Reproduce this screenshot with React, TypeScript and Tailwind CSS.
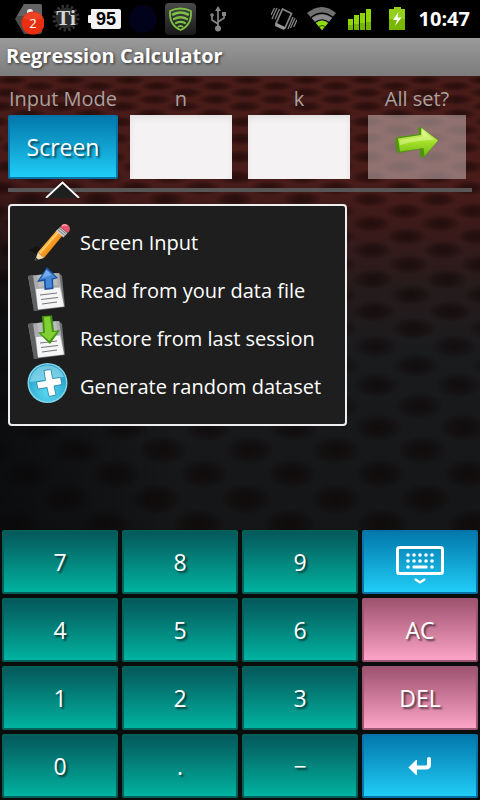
import { clsx } from "clsx";
import { useState, type ReactNode } from "react";

type Tone = "teal" | "blue" | "pink";

const TONES: Record<Tone, string> = {
  teal: "border-[#04605a] bg-linear-to-b from-[#04595b] to-[#00b3a0]",
  blue: "border-[#0873a6] bg-linear-to-b from-[#0479ad] to-[#20cdf6]",
  pink: "border-[#9c5573] bg-linear-to-b from-[#9f5470] to-[#fda4c6]",
};

// Rows of dimples get taller and wider apart towards the bottom of the screen.
const DIMPLES = (() => {
  const out: { x: number; y: number; s: number }[] = [];
  const centre = 336;
  let y = 4;
  let row = 1;
  while (y < 560) {
    const step = 34.5 + (y - 139) * 0.037;
    for (let k = -14; k < 10; k++) {
      if (Math.abs(k + row) % 2 === 0) out.push({ x: centre + k * step, y, s: step / 34.5 });
    }
    y += 6 + y * 0.0475;
    row += 1;
  }
  return out;
})();

function Backdrop() {
  return (
    <svg
      className="absolute inset-0 h-full w-full"
      viewBox="0 0 480 724"
      preserveAspectRatio="xMidYMin slice"
      aria-hidden="true"
    >
      <defs>
        <linearGradient id="wall" x1="0" y1="0" x2="0" y2="1">
          <stop offset="0" stopColor="#471b18" />
          <stop offset="0.15" stopColor="#491c1a" />
          <stop offset="0.21" stopColor="#3a1a19" />
          <stop offset="0.29" stopColor="#261b1c" />
          <stop offset="0.38" stopColor="#1a1b1d" />
          <stop offset="0.6" stopColor="#151617" />
          <stop offset="1" stopColor="#0d0d0d" />
        </linearGradient>
        <linearGradient id="edge" x1="0" y1="0" x2="1" y2="0">
          <stop offset="0" stopColor="#08090b" stopOpacity="0.7" />
          <stop offset="0.35" stopColor="#08090b" stopOpacity="0" />
        </linearGradient>
        <linearGradient id="reach" x1="0" y1="0" x2="0" y2="1">
          <stop offset="0" stopColor="#000" />
          <stop offset="0.25" stopColor="#fff" />
        </linearGradient>
        <mask id="lower">
          <rect y="80" width="480" height="644" fill="url(#reach)" />
        </mask>
        <radialGradient id="dimple">
          <stop offset="0" stopColor="#0a0100" stopOpacity="0.5" />
          <stop offset="0.5" stopColor="#0a0100" stopOpacity="0.36" />
          <stop offset="1" stopColor="#0a0100" stopOpacity="0" />
        </radialGradient>
      </defs>
      <rect width="480" height="724" fill="url(#wall)" />
      {DIMPLES.map((d, i) => (
        <ellipse key={i} cx={d.x} cy={d.y} rx={20 * d.s} ry={5 + d.y * 0.026} fill="url(#dimple)" />
      ))}
      <rect y="80" width="480" height="644" fill="url(#edge)" mask="url(#lower)" />
    </svg>
  );
}

function StatusBar() {
  return (
    <header className="flex h-[38px] items-center justify-between bg-black pr-[10px] pl-[15px]">
      <div className="flex items-center gap-2">
        <svg width="29" height="32" viewBox="0 0 29 32">
          <path d="M9 1h16q2 0 2 2v26q0 2-2 2H9L0 16z" fill="#4b4b4b" />
          <path d="M9 1h16q2 0 2 2v10H2z" fill="#636363" />
          <circle cx="15" cy="9" r="3" fill="#eee" />
          <circle cx="18" cy="20" r="11.500" fill="#e92f10" />
          <path d="M8 15a11.500 11.500 0 0 1 20 0q-10 4-20 0z" fill="#f4553a" opacity="0.5" />
          <text x="18" y="25" textAnchor="middle" fontSize="13" fill="#fff" fontFamily="Open Sans, sans-serif">
            2
          </text>
        </svg>
        <svg width="28" height="30" viewBox="0 0 28 30">
          <circle cx="14" cy="14" r="10.500" fill="#2b2b2b" />
          <circle cx="14" cy="14" r="12" fill="none" stroke="#333" strokeWidth="3" strokeDasharray="2.400 2.300" />
          <text
            x="14"
            y="21"
            textAnchor="middle"
            fontSize="21"
            fontWeight="700"
            fill="#d4d4d4"
            fontFamily="Liberation Serif, serif"
          >
            Ti
          </text>
        </svg>
        <svg width="33" height="22" viewBox="0 0 33 22">
          <path d="M4 1h27q2 0 2 2v16q0 2-2 2H5q-2 0-2-2v-4H1q-1 0-1-1V8q0-1 1-1h2V2q0-1 1-1z" fill="#f2f2f2" />
          <text
            x="18"
            y="17"
            textAnchor="middle"
            fontSize="18"
            fontWeight="700"
            fill="#000"
            fontFamily="Liberation Sans, sans-serif"
          >
            95
          </text>
        </svg>
        <div className="size-7 rounded-full bg-[#02021a]" />
        <svg width="31" height="32" viewBox="0 0 31 32">
          <defs>
            <linearGradient id="tile" x1="0" y1="0" x2="0" y2="1">
              <stop offset="0" stopColor="#4a4a4a" />
              <stop offset="1" stopColor="#181818" />
            </linearGradient>
          </defs>
          <rect width="31" height="32" rx="4" fill="url(#tile)" />
          <g fill="none" stroke="#7cc142" strokeLinecap="round">
            <path d="M5 8q10.500-5 21 0q1 14-10.500 19Q4 22 5 8z" strokeWidth="1.800" strokeLinejoin="round" />
            <path d="M8 11.500q7.500-4 15 0" strokeWidth="2.600" />
            <path d="M9 16q6.500-3.500 13 0" strokeWidth="2.400" />
            <path d="M11 20q4.500-2.400 9 0" strokeWidth="2.200" />
            <path d="M13.500 23.500q2-1 4 0" strokeWidth="1.800" />
          </g>
        </svg>
        <svg width="28" height="28" viewBox="0 0 28 28" fill="none" stroke="#858585" strokeWidth="1.700">
          <path d="M14 5v17M14 19l-6-4v-4M14 17l6-4v-3" />
          <path d="M14 1l3 5h-6z" fill="#858585" stroke="none" />
          <circle cx="14" cy="23.500" r="3" fill="#858585" stroke="none" />
          <circle cx="8" cy="10" r="1.800" fill="#858585" stroke="none" />
          <path d="M18 7h4v4h-4z" fill="#858585" stroke="none" />
        </svg>
      </div>
      <div className="flex items-center gap-2.5">
        <svg width="26" height="26" viewBox="0 0 26 26" fill="none" stroke="#858585">
          <path d="M11.500 3L20.500 7.500L14 22L5 17.500z" strokeWidth="1.800" strokeLinejoin="round" />
          <path d="M4.500 17L14.500 21.500L13 24L4 20z" fill="#9a9a9a" stroke="none" />
          <path d="M6 2L1 13M8.500 3L4 13M3.500 2L0 9" strokeWidth="1.300" />
          <path d="M22 11l-5 12M24 12l-4.500 10M25.800 14l-3 7" strokeWidth="1.300" />
        </svg>
        <svg width="30" height="26" viewBox="0 0 30 26">
          <path d="M15 24L0 7q15-12 29 0z" fill="#707070" />
          <path d="M15 24L5 12q10-7 20 0z" fill="#8a8a8a" />
          <path d="M4 11.500q11-8.500 22 0" fill="none" stroke="#000" strokeWidth="1.500" />
          <path d="M9 17q6-4.500 12 0L15 24z" fill="#8fdc08" />
          <path d="M8 16.500q7-5.500 14 0" fill="none" stroke="#000" strokeWidth="1.200" />
          <path d="M12 20.500q3-2 6 0" fill="none" stroke="#2d4d00" strokeWidth="1" />
        </svg>
        <svg width="30" height="26" viewBox="0 0 30 26" fill="#8ed606">
          <path d="M1 13h5v11H1zM7 9h5v15H7zM13 7h5v17h-5zM19 3h5v21h-5z" />
          <path d="M1 19h5v5H1zM7 18h5v6H7zM13 17h5v7h-5zM19 16h5v8h-5z" fill="#71b500" />
        </svg>
        <svg width="22" height="26" viewBox="0 0 22 26">
          <path d="M7 1h7v2h4v21H2V3h5z" fill="#93cf1b" />
          <path d="M2 13h16v11H2z" fill="#78b800" />
          <path d="M11.500 6L6 14h4L8 20L14.500 11.500h-4z" fill="#fff" />
        </svg>
        <time className="text-xl font-bold text-white">10:47</time>
      </div>
    </header>
  );
}

function PencilIcon() {
  return (
    <svg width="44" height="44" viewBox="0 0 44 44">
      <defs>
        <linearGradient id="wood" x1="0" y1="0" x2="1" y2="1">
          <stop offset="0.3" stopColor="#ffc35a" />
          <stop offset="0.5" stopColor="#fb9d20" />
          <stop offset="0.75" stopColor="#d77410" />
        </linearGradient>
      </defs>
      <path d="M12 34L3 29l8-4l6 5z" fill="#0c0c0c" opacity="0.6" />
      <path d="M12 31L31 9l6 5L18 37z" fill="url(#wood)" />
      <path d="M14 32L32.500 11" stroke="#ffd27a" strokeWidth="1.500" />
      <path d="M12 31l6 6L9 39.500z" fill="#f0d9a8" />
      <path d="M10 36.500l2.500 2.200l-3.500 0.800z" fill="#333" />
      <path d="M30 10l4-4l7.500 6l-4 4.500z" fill="#c9c9c9" />
      <path d="M31.500 8.500l7.500 6M33 7l7.500 6" stroke="#777" strokeWidth="1" />
      <path d="M34 6q4-5 8-2t0 8z" fill="#e4576c" />
      <path d="M36 5q3-2.500 5 0" stroke="#ffa1ac" strokeWidth="1.500" fill="none" />
    </svg>
  );
}

function DiskIcon({ direction }: { direction: "up" | "down" }) {
  return (
    <svg width="44" height="44" viewBox="0 2 44 44" className="overflow-visible">
      <path d="M2 9L33 6l3 3l3 31L8 44z" fill="#6c6e70" />
      <path d="M2 9L33 6l5 32L10 41z" fill="#a9abad" />
      <path d="M2 9l5-0.500L12 43l-4 1z" fill="#5f6163" />
      <path d="M11 8L30 6.500L32 18L13 20z" fill="#b9bbbd" />
      <path d="M10 22l24-1.500l4 19L12 42.500z" fill="#f5f5f5" />
      <path d="M14 28l17-2M15 32.500l17-2M16 37l15-2" stroke="#777" strokeWidth="1.200" />
      {direction === "up" ? (
        <>
          <path d="M21 0L32 11l-5 1.500l0.500 9.500l-9 1l-0.500-9l-7 1z" fill="#1b4f9c" />
          <path d="M20.500 2L30 10.500l-4.500 1l0.500 9l-6 0.500l-0.500-9l-6 1z" fill="#4488d8" />
          <path d="M20.500 3L26 8q-5 1-10 3z" fill="#8cbcf2" opacity="0.7" />
        </>
      ) : (
        <>
          <path d="M16 1l10-0.500l2 15.500l6-1L24 29L12 17.500l5-0.500z" fill="#3f9210" />
          <path d="M18 2l6-0.500l2 15.500l5-0.500L23.500 26L14.500 18.500l4.500-0.500z" fill="#82cf31" />
        </>
      )}
    </svg>
  );
}

function PlusIcon() {
  return (
    <svg width="44" height="44" viewBox="0 3 44 44" className="overflow-visible">
      <defs>
        <radialGradient id="orb" cx="0.5" cy="0.75" r="0.7">
          <stop offset="0" stopColor="#5bd9f3" />
          <stop offset="0.7" stopColor="#33afd3" />
          <stop offset="1" stopColor="#2196bd" />
        </radialGradient>
      </defs>
      <circle cx="21.500" cy="21" r="20" fill="#7fd4ea" />
      <circle cx="21.500" cy="21" r="18.500" fill="url(#orb)" />
      <path d="M4 20A17.500 17.500 0 0 1 38 15Q22 17 4 20z" fill="#a5e6f5" opacity="0.6" />
      <path
        d="M18 8.500l7-1l1.500 9l8-1l1.500 7l-8 1.500l2 9l-7 1.500l-2-9l-9 1.500l-1.500-7l9-1.500z"
        fill="#fff"
        stroke="#1c7fa3"
        strokeWidth="0.800"
      />
    </svg>
  );
}

function ArrowIcon() {
  return (
    <svg width="46" height="34" viewBox="0 0 46 34">
      <defs>
        <linearGradient id="leaf" x1="0" y1="0" x2="0" y2="1">
          <stop offset="0" stopColor="#e2f78e" />
          <stop offset="0.5" stopColor="#a5e02a" />
          <stop offset="1" stopColor="#6fbb10" />
        </linearGradient>
      </defs>
      <path d="M1 13l3-2l21-3l-1-6l3-1l17 13L30 32l-4-2l-0.500-7L5 27l-2.500-2z" fill="#4f9410" />
      <path d="M4 12.500L27 9l0.500-7L44 14.500L30.500 30L29.500 22L6 25.500z" fill="url(#leaf)" />
      <path d="M5.500 14L28.500 10.500l0-6L40 14Q24 14 6 19z" fill="#f0ffae" opacity="0.45" />
    </svg>
  );
}

function KeyboardIcon() {
  return (
    <svg width="50" height="44" viewBox="0 0 50 44" fill="#fff">
      <rect x="2.500" y="7.500" width="45" height="26" rx="2" fill="none" stroke="#fff" strokeWidth="3" />
      {[0, 1, 2, 3, 4].map((c) => (
        <g key={c}>
          <circle cx={13 + c * 6} cy="15" r="1.800" />
          <circle cx={13 + c * 6} cy="21" r="1.800" />
        </g>
      ))}
      <circle cx="13" cy="27" r="1.800" />
      <circle cx="37" cy="27" r="1.800" />
      <rect x="17.500" y="25.500" width="15" height="3" rx="1" />
      <path d="M20.500 39.500l4.500 3l4.500-3" fill="none" stroke="#fff" strokeWidth="2.200" strokeLinecap="round" />
    </svg>
  );
}

function EnterIcon() {
  return (
    <svg width="24" height="20" viewBox="0 0 24 20">
      <path d="M21 3v5.500q0 3-3 3H8" fill="none" stroke="#fff" strokeWidth="4" strokeLinecap="round" />
      <path d="M8.500 4v15L1 11.500z" fill="#fff" stroke="#fff" strokeLinejoin="round" />
    </svg>
  );
}

const MENU: { label: string; icon: ReactNode }[] = [
  { label: "Screen Input", icon: <PencilIcon /> },
  { label: "Read from your data file", icon: <DiskIcon direction="up" /> },
  { label: "Restore from last session", icon: <DiskIcon direction="down" /> },
  { label: "Generate random dataset", icon: <PlusIcon /> },
];

const KEYS: { name: string; tone?: Tone; icon?: ReactNode }[] = [
  { name: "7" },
  { name: "8" },
  { name: "9" },
  { name: "Keyboard", tone: "blue", icon: <KeyboardIcon /> },
  { name: "4" },
  { name: "5" },
  { name: "6" },
  { name: "AC", tone: "pink" },
  { name: "1" },
  { name: "2" },
  { name: "3" },
  { name: "DEL", tone: "pink" },
  { name: "0" },
  { name: "." },
  { name: "−" },
  { name: "Enter", tone: "blue", icon: <EnterIcon /> },
];

const shadow = "text-shadow-[2px_2px_2px_rgb(0_0_0_/_0.6)]";
const label = "block text-center text-xl leading-7 whitespace-nowrap text-[#aaa09e]";
const field =
  "block h-16 w-full bg-[#f4f2f2] px-2 text-center text-[23px] text-black shadow-[inset_0_3px_6px_rgb(0_0_0_/_0.08)] outline-none";

export default function App() {
  const [open, setOpen] = useState(true);
  const [n, setN] = useState("");
  const [k, setK] = useState("");

  return (
    <div className="flex min-h-screen flex-col bg-black font-['Open_Sans','Noto_Sans',sans-serif]">
      <StatusBar />
      <h1 className="h-[38px] bg-linear-to-b from-[#9a9a9a] to-[#7c7c7c] px-1.5 text-xl leading-9 font-bold text-white text-shadow-[1px_1px_3px_rgb(0_0_0_/_0.7)]">
        Regression Calculator
      </h1>
      <main className="relative flex grow flex-col justify-between overflow-hidden">
        <Backdrop />
        <section className="relative px-1 pt-[9px]">
          <div className="grid grid-cols-4">
            <div className="px-1">
              <label htmlFor="mode" className={clsx(label, "mb-0.5")}>
                Input Mode
              </label>
              <button
                id="mode"
                type="button"
                aria-expanded={open}
                onClick={() => setOpen(!open)}
                className={clsx("h-16 w-full rounded-xs border-2 text-[23px] text-white", TONES.blue, shadow)}
              >
                Screen
              </button>
            </div>
            <div className="px-2">
              <label htmlFor="n" className={clsx(label, "mb-0.5")}>
                n
              </label>
              <input id="n" value={n} onChange={(e) => setN(e.target.value)} className={field} />
            </div>
            <div className="px-2">
              <label htmlFor="k" className={clsx(label, "mb-0.5")}>
                k
              </label>
              <input id="k" value={k} onChange={(e) => setK(e.target.value)} className={field} />
            </div>
            <div className="px-[10px]">
              <label htmlFor="run" className={clsx(label, "mb-0.5")}>
                All set?
              </label>
              <button
                id="run"
                type="button"
                className="flex h-16 w-full items-center justify-center bg-[#d8c8c8]/50 pb-2"
              >
                <ArrowIcon />
              </button>
            </div>
          </div>
          <hr className="mx-1 mt-[9px] h-1 border-0 bg-[#575555]" />
          {open ? (
            <>
              <svg className="absolute -bottom-1.5 left-[45px]" width="35" height="17" viewBox="0 0 35 17">
                <path d="M1 17L17.500 1.500L34 17z" fill="#1e1f1f" />
                <path d="M1 17L17.500 1.500L34 17" fill="none" stroke="#fff" strokeWidth="1.800" />
              </svg>
              <ul className="absolute top-full left-2 mt-3 rounded border-2 border-[#eee] bg-[#1e1e1e] py-[13px] pr-6 pl-4">
                {MENU.map((item) => (
                  <li key={item.label}>
                    <button
                      type="button"
                      onClick={() => setOpen(false)}
                      className="flex h-12 items-center gap-[10px] text-xl whitespace-nowrap text-white"
                    >
                      {item.icon}
                      {item.label}
                    </button>
                  </li>
                ))}
              </ul>
            </>
          ) : null}
        </section>
        <section className="relative grid grid-cols-4 gap-1 bg-[#0b0c0c] px-0.5 pb-0.5">
          {KEYS.map((key) => (
            <button
              key={key.name}
              type="button"
              aria-label={key.name}
              className={clsx(
                "flex h-16 items-center justify-center rounded-xs border-2 text-[23px] text-white",
                TONES[key.tone ?? "teal"],
                shadow,
              )}
            >
              {key.icon ?? key.name}
            </button>
          ))}
        </section>
      </main>
    </div>
  );
}
